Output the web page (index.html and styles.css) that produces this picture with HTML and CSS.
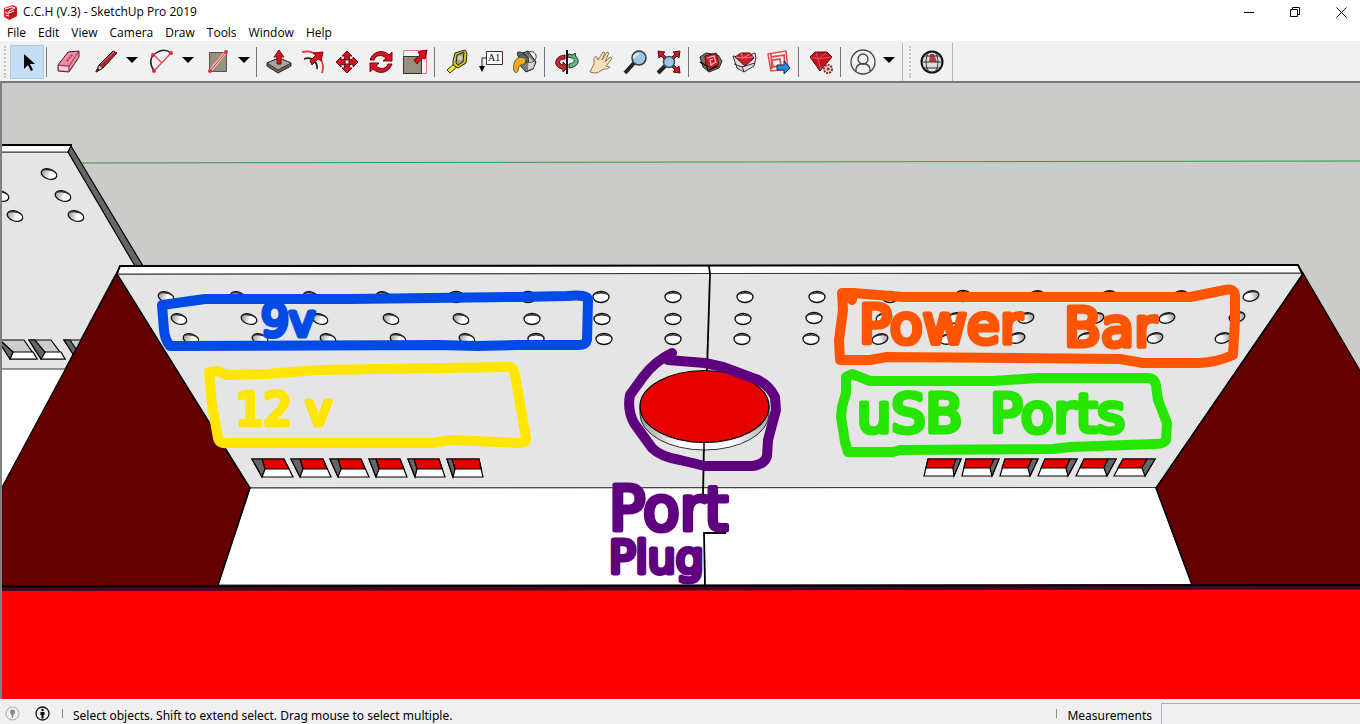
FILE: index.html
```html
<!DOCTYPE html>
<html lang="en">
<head>
<meta charset="UTF-8" />
<meta name="viewport" content="width=device-width, initial-scale=1.0" />
<title>C.C.H (V.3) - SketchUp Pro 2019</title>
<link rel="stylesheet" href="styles.css">
</head>
<body>
<header class="titlebar">
  <svg class="app-icon" viewBox="0 0 14 15"><path d="M1 3 10 0l4 2v9l-8 4-5-3z" fill="#e02a32"/><path d="M1 4l5 2v9l8-4V3" fill="#c4141e"/><path d="M2 4l7-2 3 1-6 3v2l5-2M2 7l4 2M3 10l3 1" fill="none" stroke="#fff" stroke-width="1"/></svg>
  <h1>C.C.H (V.3) - SketchUp Pro 2019</h1>
  <div class="window-buttons">
    <button aria-label="Minimize"><svg viewBox="0 0 11 11"><path d="M0 5.500h10"/></svg></button>
    <button aria-label="Restore"><svg viewBox="0 0 11 11"><path d="M.5 2.500h7v7h-7zM2.500 2.500v-2h7v7h-2"/></svg></button>
    <button aria-label="Close"><svg viewBox="0 0 11 11"><path d="M.5.5l10 10M10.500.5l-10 10"/></svg></button>
  </div>
</header>

<nav class="menubar">
  <button>File</button>
  <button>Edit</button>
  <button>View</button>
  <button>Camera</button>
  <button>Draw</button>
  <button>Tools</button>
  <button>Window</button>
  <button>Help</button>
</nav>

<div class="toolbar">
  <span class="grip"></span>
  <button class="tool active" aria-label="Select"><svg viewBox="0 0 26 26"><path d="M10 5v15l4-4 3 6 2-1-3-6h5z" fill="#000"/></svg></button>
  <span class="sep"></span>
  <button class="tool" aria-label="Eraser"><svg viewBox="0 0 26 26"><path d="M2 16 12 3l11-1v6L13 23l-11-1z" fill="#f08ca0" stroke="#3c2028"/><path d="M2 16l11 1L23 2M13 17v6" fill="none" stroke="#7d3c4a"/><path d="M3 17l9 1v4l-9-1z" fill="#fbc3cf"/><path d="M11 12l6-7" stroke="#b83550" stroke-width="2" stroke-dasharray="2 1"/></svg></button>
  <span class="split">
    <button class="tool" aria-label="Line"><svg viewBox="0 0 26 26"><path d="M3 23l3-7L20 2l4 2L10 19z" fill="#b3252c" stroke="#2e1010"/><path d="M3 23l3-7 4 3z" fill="#d9c79c" stroke="#333"/><path d="M3 23l2-4 2 2z" fill="#222"/><path d="M8 15L21 3" stroke="#e0686c"/></svg></button>
    <button class="caret" aria-label="Line tools"></button>
  </span>
  <span class="split">
    <button class="tool" aria-label="Arc"><svg viewBox="0 0 26 26"><path d="M5 22C0 14 1 8 7 4s11-3 15 0" fill="none" stroke="#222" stroke-width="1.500"/><path d="M5 22L22 4M5 6l8 8M5 22" fill="none" stroke="#e04450" stroke-width="1.200"/><g fill="#dc2837"><circle cx="5" cy="22" r="2"/><circle cx="22" cy="4" r="2"/><circle cx="4" cy="6" r="2"/></g></svg></button>
    <button class="caret" aria-label="Arc tools"></button>
  </span>
  <span class="split">
    <button class="tool" aria-label="Rectangle"><svg viewBox="0 0 26 26"><path d="M4.500 3.500h17v19h-17z" fill="#96917f" stroke="#55534b"/><path d="M5 22L21 3" stroke="#ffb8b8" stroke-width="3"/><path d="M5 22L21 3" stroke="#d93844"/><circle cx="5" cy="22" r="2" fill="#dd3341"/><circle cx="21" cy="3" r="2" fill="#dd3341"/></svg></button>
    <button class="caret" aria-label="Shape tools"></button>
  </span>
  <span class="sep"></span>
  <button class="tool" aria-label="Push/Pull"><svg viewBox="0 0 26 26"><path d="M1 14l12-5 12 5v3l-13 7L1 17z" fill="#69665a" stroke="#222"/><path d="M1 14l12-5 12 5-13 7z" fill="#aaa697" stroke="#333"/><path d="M11 15V8H8l5-7 5 7h-3v7z" fill="#d9121d" stroke="#7c0710"/></svg></button>
  <button class="tool" aria-label="Offset"><svg viewBox="0 0 26 26"><path d="M2 3c14-3 24 9 20 21" fill="none" stroke="#e33b47" stroke-width="1.800"/><path d="M4 10c7-3 14 3 13 10" fill="none" stroke="#222" stroke-width="1.800"/><path d="M10 12l6-6-3-2 10-1-2 9-3-2-6 6z" fill="#d9121d" stroke="#7c0710"/></svg></button>
  <button class="tool" aria-label="Move"><svg viewBox="0 0 26 26"><g fill="#d9121d" stroke="#5f080d"><path d="M13 2l5 5h-3l1 4h-6l1-4H8z"/><path d="M13 24l5-5h-3l1-4h-6l1 4H8z"/><path d="M2 13l5-5v3l4-1v6l-4-1v3z"/><path d="M24 13l-5-5v3l-4-1v6l4-1v3z"/></g></svg></button>
  <button class="tool" aria-label="Rotate"><svg viewBox="0 0 26 26"><g fill="#d3151f" stroke="#760b12"><path d="M2 11C5 2 15 0 21 6l3-3v9h-9l3-3C13 5 8 6 6 11z"/><path d="M24 15c-3 9-13 11-19 5l-3 3v-9h9l-3 3c5 4 10 3 12-2z"/></g></svg></button>
  <button class="tool" aria-label="Scale"><svg viewBox="0 0 26 26"><path d="M1.500 1.500h23v23h-23z" fill="#fff4f4" stroke="#e77880"/><path d="M1.500 7.500h18v17h-18z" fill="#96917f" stroke="#333"/><path d="M12 11l6-5-2-3 9-2-2 9-3-1-5 6z" fill="#d9121d" stroke="#7c0710"/></svg></button>
  <span class="sep"></span>
  <button class="tool" aria-label="Tape Measure"><svg viewBox="0 0 26 26"><path d="M3 21l9-8 3 3-9 8z" fill="#f4e52a" stroke="#333"/><path d="M9 12l2-8 10-3 2 3-1 10-8 5-5-3z" fill="#d8c326" stroke="#222"/><path d="M12 14l1-8 7-3-1 10-5 3z" fill="#a19e70" stroke="#222"/><circle cx="16" cy="9" r="2.500" fill="#cfccb0"/></svg></button>
  <button class="tool" aria-label="Text"><svg viewBox="0 0 26 26"><path d="M8.500 2.500h16v13h-16z" fill="#fff" stroke="#333"/><path d="M8 9H4v9" fill="none" stroke="#222"/><path d="M1 17h6l-3 6z" fill="#000"/><text class="tool-text" x="10" y="12">A1</text></svg></button>
  <button class="tool" aria-label="Paint Bucket"><svg viewBox="0 0 26 26"><path d="M8 5l8-3 8 11-3 7-7 3-8-9z" fill="#777b78" stroke="#222"/><path d="M17 8l6 6-2 5-5 2z" fill="#d4d8d4"/><path d="M15 4c6-4 10 1 9 5s-7 6-9 3" fill="none" stroke="#444"/><ellipse cx="11" cy="8" rx="3" ry="7" fill="#53666b" stroke="#222" transform="rotate(-50 11 8)"/><path d="M14 10C6 5 0 12 2 22c1 2 3 2 4 0 0-5 3-7 7-7z" fill="#f0ae26" stroke="#6a4b0b"/></svg></button>
  <span class="sep"></span>
  <button class="tool" aria-label="Orbit"><svg viewBox="0 0 26 26"><path d="M14 5l5 1 2-2 1 4c4 3 3 10-7 11v-4c6-1 7-5 3-6l-4-1z" fill="#62b783" stroke="#173d27"/><path d="M11 6C-1 7-1 19 9 20v3l5-5-5-5v3c-5-1-5-6 2-6z" fill="#c12735" stroke="#4e0b11"/><path d="M13 1v24" stroke="#111" stroke-width="2"/></svg></button>
  <button class="tool" aria-label="Pan"><svg viewBox="0 0 26 26"><path d="M2 23l4-8V9c1-2 3-2 3 0l1 2 5-8c2 0 2 1 1 3l-2 5 5-8c2 0 2 2 1 3l-3 7 5-5c2 0 2 2 1 3l-5 6 4 1c-2 3-5 1-8 3-3 2-4 3-7 3z" fill="#f5dfb8" stroke="#8b7551"/></svg></button>
  <button class="tool" aria-label="Zoom"><svg viewBox="0 0 26 26"><path d="M3 24l9-10" stroke="#222" stroke-width="4"/><circle cx="17" cy="9" r="7" fill="#9dc4e3" stroke="#293e4f" stroke-width="1.500"/><path d="M12 9c0-3 2-4 5-4" fill="none" stroke="#e4f4ff" stroke-width="2"/></svg></button>
  <button class="tool" aria-label="Zoom Extents"><svg viewBox="0 0 26 26"><path d="M2 24l8-8" stroke="#222" stroke-width="4"/><g fill="#ca1823" stroke="#6c0710"><path d="M2 2l7 1-2 2 3 3-2 2-3-3-2 2z"/><path d="M24 2l-7 1 2 2-3 3 2 2 3-3 2 2z"/><path d="M24 24l-1-7-2 2-3-3-2 2 3 3-2 2z"/></g><circle cx="13" cy="13" r="5.500" fill="#9dc4e3" stroke="#34536b" stroke-width="1.500"/></svg></button>
  <span class="sep"></span>
  <button class="tool" aria-label="3D Warehouse"><svg viewBox="0 0 26 26"><path d="M2 8l6-4 12 2 4 6-3 7-10 4-6-5z" fill="#7e7265" stroke="#222"/><path d="M7 7l11-3 3 11-7 4-6-2z" fill="#cf1924" stroke="#5d0b10"/><path d="M9 9l7-2 2 6-5 3-1-5 3-1" fill="none" stroke="#ffc3c3" stroke-width="1.300"/><path d="M2 13l7 4 1 5M11 21l9-4" fill="none" stroke="#181818" stroke-width="1.500"/></svg></button>
  <button class="tool" aria-label="Extension Warehouse"><svg viewBox="0 0 26 26"><path d="M1 7l9 2 13-5 1 5-2 8-10 6-7-4z" fill="#ddd" stroke="#333"/><path d="M2 15l8 3 13-4M10 17l2 6" fill="none" stroke="#333"/><path d="M3 8l6-4 9 0 4 5-9 8z" fill="#d01b28" stroke="#570c12"/><path d="M4 8l7 1 10-1M9 4l2 5 7-4" fill="none" stroke="#f48187"/></svg></button>
  <button class="tool" aria-label="Send to LayOut"><svg viewBox="0 0 26 26"><path d="M2 5l18-3 2 18-17 2z" fill="#fff" stroke="#e34b55" stroke-width="1.500"/><path d="M5 8l13-2 1 10M6 11l8-1 1 7-8 1zM5 5l1 15" fill="none" stroke="#e34b55" stroke-width="1.800"/><path d="M11 16h7v-4l6 7-6 6v-4h-7z" fill="#248de2" stroke="#102f48"/></svg></button>
  <span class="sep"></span>
  <button class="tool" aria-label="Extension Manager"><svg viewBox="0 0 26 26"><path d="M2 8l5-5h12l5 5-12 14z" fill="#c4111e" stroke="#610a11"/><path d="M3 8l7 2 13-2M8 3l2 7 8-6M10 10l3 11" fill="none" stroke="#e0505a"/><circle cx="20" cy="20" r="4" fill="#f0d7d7" stroke="#8a2932" stroke-width="2" stroke-dasharray="2 1"/><circle cx="20" cy="20" r="1.500" fill="#8a2932"/></svg></button>
  <span class="sep"></span>
  <button class="tool" aria-label="Sign in"><svg viewBox="0 0 26 26"><g fill="none" stroke="#3f454b" stroke-width="1.300"><circle cx="13" cy="13" r="12"/><circle cx="13" cy="10" r="5"/><path d="M6 22v-2c1-7 13-7 14 0v2"/></g></svg></button>
  <button class="caret" aria-label="Account"></button>
  <span class="sep tall"></span>
  <span class="grip"></span>
  <button class="tool" aria-label="Add Location"><svg viewBox="0 0 26 26"><circle cx="13" cy="13" r="10.500" fill="#ddd" stroke="#111" stroke-width="2"/><path d="M11 5h4l3 8h-8z" fill="#c9343e"/><path d="M3 13h20M5 7h16M5 19h16M10 3c-4 6-4 14 0 20M16 3c4 6 4 14 0 20" fill="none" stroke="#333"/></svg></button>
  <span class="sep tall"></span>
</div>

<main class="viewport">
<svg class="model" viewBox="2 83 1358 616" preserveAspectRatio="xMidYMid slice">
  <defs>
    <linearGradient id="holeLeft"><stop offset="0" stop-color="#999"/><stop offset=".6" stop-color="#fff"/></linearGradient>
    <linearGradient id="holeRight"><stop offset=".4" stop-color="#fff"/><stop offset="1" stop-color="#999"/></linearGradient>
    <linearGradient id="lip"><stop offset="0" stop-color="#999"/><stop offset=".3" stop-color="#fff"/><stop offset=".7" stop-color="#fff"/><stop offset="1" stop-color="#aab"/></linearGradient>
    <g id="hl"><ellipse rx="8" ry="5" transform="rotate(18)" fill="url(#holeLeft)" stroke="#111" stroke-width="1.300"/><path d="M-7-3Q-1-8 7-1Q0-5-7-3" fill="#222"/></g>
    <g id="hm"><ellipse rx="8" ry="5.500" fill="#fff" stroke="#111" stroke-width="1.300"/><path d="M-7-2Q0-8 7-2Q0-5-7-2" fill="#222"/></g>
    <g id="hr"><ellipse rx="8" ry="5" transform="rotate(-15)" fill="url(#holeRight)" stroke="#111" stroke-width="1.300"/><path d="M-7-1Q0-8 7-3Q0-5-7-1" fill="#222"/></g>
  </defs>

  <!-- background and green axis -->
  <rect class="sky" x="2" y="83" width="1358" height="616"/>
  <path d="M82 163L1360 161" stroke="#28a03c"/>

  <!-- second box behind on the left -->
  <path class="floor" d="M2 369h70L2 490z"/>
  <path class="panel line" d="M0 152h68l67 113-20 10-50 94H0z"/>
  <path class="floor line" d="M0 145.500h71l-3 6.500H0z"/>
  <path class="shade edge" d="M71 146l72 120h-8L68 152z"/>
  <path d="M0 145h72" stroke="#000" stroke-width="2"/>
  <use href="#hl" x="49" y="174"/><use href="#hl" x="63" y="196"/><use href="#hl" x="76" y="216"/><use href="#hl" x="15" y="216"/><use href="#hl" x="1" y="196"/>
  <g class="edge">
    <path fill="#ccc" d="M0 340h24l13 19H10L0 342z"/><path fill="#fff" d="M13 352h20l4 7H10z"/><path class="shade" d="M0 340l13 12-3 7-10-15z"/>
    <path fill="#ccc" d="M29 340h22l14 19H41z"/><path fill="#fff" d="M45 352h16l4 7H41z"/><path class="shade" d="M29 340h6l10 12-4 7z"/>
    <path fill="#ccc" d="M64 340h22v19h-9z"/><path class="shade" d="M64 340h6l8 12-2 7z"/>
  </g>

  <!-- main box -->
  <path class="side edge" d="M117 273L250 488 218 586H0V491z"/>
  <path class="side edge" d="M1303 273L1156 488l36 98h170V374z"/>
  <path class="panel line" d="M116 274L1303 273 1156 487.500 250 488z"/>
  <path class="floor line" d="M120 266L1298 265l5 8L116 274z"/>
  <path d="M116 276l4-10L1298 265l5 10" fill="none" stroke="#000" stroke-width="2"/>
  <path class="floor line" d="M250 488L1156 487.500l36 97.500H218z"/>
  <path d="M117 274L250 488 218 585M1303 274L1156 488l36 97" fill="none" stroke="#000" stroke-width="1.500"/>

  <use href="#hl" x="166" y="297"/><use href="#hl" x="238" y="297"/><use href="#hl" x="311" y="297"/><use href="#hl" x="384" y="297"/><use href="#hm" x="456" y="297"/><use href="#hm" x="528" y="297"/><use href="#hm" x="601" y="297"/><use href="#hm" x="673" y="297"/><use href="#hm" x="745" y="297"/><use href="#hm" x="817" y="297"/><use href="#hm" x="890" y="297"/><use href="#hm" x="963" y="296"/><use href="#hr" x="1036" y="296"/><use href="#hr" x="1108" y="296"/><use href="#hr" x="1180" y="296"/><use href="#hr" x="1251" y="296"/>
  <use href="#hl" x="179" y="319"/><use href="#hl" x="249" y="319"/><use href="#hl" x="320" y="319"/><use href="#hl" x="391" y="319"/><use href="#hl" x="461" y="319"/><use href="#hm" x="532" y="319"/><use href="#hm" x="602" y="319"/><use href="#hm" x="673" y="319"/><use href="#hm" x="743" y="319"/><use href="#hm" x="814" y="318"/><use href="#hr" x="884" y="318"/><use href="#hr" x="955" y="318"/><use href="#hr" x="1026" y="318"/><use href="#hr" x="1096" y="318"/><use href="#hr" x="1167" y="318"/><use href="#hr" x="1237" y="317"/>
  <use href="#hl" x="191" y="339"/><use href="#hl" x="260" y="339"/><use href="#hl" x="328" y="339"/><use href="#hl" x="398" y="339"/><use href="#hl" x="467" y="339"/><use href="#hm" x="536" y="339"/><use href="#hm" x="604" y="339"/><use href="#hm" x="673" y="339"/><use href="#hm" x="742" y="339"/><use href="#hm" x="811" y="339"/><use href="#hr" x="880" y="339"/><use href="#hr" x="948" y="339"/><use href="#hr" x="1017" y="338"/><use href="#hr" x="1086" y="338"/><use href="#hr" x="1155" y="338"/><use href="#hr" x="1223" y="338"/>

  <!-- switches, left bank -->
  <g class="edge">
    <path class="floor" d="M252 459h32l9 18h-31z"/><path class="red" d="M262 459h22l5 10h-24z"/><path class="shade" d="M252 459h10l3 10-3 8z"/>
    <path class="floor" d="M291 459h32l8 18h-31z"/><path class="red" d="M300 459h23l4 10h-24z"/><path class="shade" d="M291 459h9l3 10-3 8z"/>
    <path class="floor" d="M330 459h31l8 18h-31z"/><path class="red" d="M338 459h23l4 10h-24z"/><path class="shade" d="M330 459h8l3 10-3 8z"/>
    <path class="floor" d="M369 459h31l7 18h-31z"/><path class="red" d="M376 459h24l4 10h-25z"/><path class="shade" d="M369 459h7l3 10-3 8z"/>
    <path class="floor" d="M408 459h31l6 18h-30z"/><path class="red" d="M414 459h25l3 10h-25z"/><path class="shade" d="M408 459h6l3 10-2 8z"/>
    <path class="floor" d="M447 459h32l4 18h-30z"/><path class="red" d="M452 459h27l2 10h-26z"/><path class="shade" d="M447 459h5l3 10-2 8z"/>
  </g>
  <!-- switches, right bank -->
  <g class="edge">
    <path class="floor" d="M928 459h33l-7 17h-30z"/><path class="red" d="M928 459h28l-3 9h-27z"/><path class="shade" d="M961 459h-5l-3 9 1 8z"/>
    <path class="floor" d="M966 459h33l-7 17h-30z"/><path class="red" d="M966 459h28l-4 9h-26z"/><path class="shade" d="M999 459h-5l-4 9 2 8z"/>
    <path class="floor" d="M1005 459h33l-8 17h-30z"/><path class="red" d="M1005 459h27l-4 9h-26z"/><path class="shade" d="M1038 459h-6l-4 9 2 8z"/>
    <path class="floor" d="M1045 459h32l-9 17h-30z"/><path class="red" d="M1045 459h25l-4 9h-25z"/><path class="shade" d="M1077 459h-7l-4 9 2 8z"/>
    <path class="floor" d="M1084 459h32l-9 17h-31z"/><path class="red" d="M1084 459h24l-4 9h-24z"/><path class="shade" d="M1116 459h-8l-4 9 3 8z"/>
    <path class="floor" d="M1123 459h32l-10 17h-31z"/><path class="red" d="M1123 459h24l-5 9h-24z"/><path class="shade" d="M1155 459h-8l-5 9 3 8z"/>
  </g>

  <!-- seam and round plug -->
  <path d="M709 266l1 8-3 96M704 440l-1 58h20M726 533h-22l1 52" fill="none" stroke="#000" stroke-width="1.800"/>
  <path class="line" d="M640 406v8a64.500 36 0 0 0 129 0v-8z" fill="url(#lip)"/>
  <ellipse class="red edge" cx="704.500" cy="406.500" rx="64.500" ry="36"/>
  <path d="M704 443v8" stroke="#000" stroke-width="1.500"/>

  <!-- front face -->
  <path fill="#f00" d="M0 587H1360V699H0z"/>
  <path fill="#450628" d="M0 585.500L1360 584v5.500L0 591z"/>
  <path d="M0 586.500L1360 585" stroke="#000" stroke-width="2"/>

  <!-- marker notes -->
  <g class="marker blue">
    <path d="M162 305L205 299 350 299 517 297 567 296Q588 294 588 300L587 340Q586 345 578 345L517 345 477 346 440 345 170 346Q165 340 164 330z"/>
    <text x="261" y="336" font-size="44">9v</text>
  </g>
  <g class="marker yellow">
    <path d="M209 372L217 371 227 375 267 374 317 370 508 367Q514 367 515 375L526 438Q527 443 520 443L450 440 433 443 227 443Q219 444 218 438L212 405z"/>
    <text x="236" y="425" font-size="44">12 v</text>
  </g>
  <g class="marker orange">
    <path d="M842 293L853 293 903 297 1190 297 1225 290Q1234 288 1235 295L1235 320 1233 355Q1215 363 1197 363L1143 363 1120 359 887 357 870 360 840 360 839 340 843 310zM851 294l1 6"/>
    <text x="859" y="343" font-size="54">Power</text>
    <text x="1064" y="346" font-size="54">Bar</text>
  </g>
  <g class="marker green">
    <path d="M846 377L852 374 870 381 993 381 1037 378 1147 378Q1155 378 1156 386L1158 400 1167 423 1166 440Q1164 444 1155 444L1070 447 1053 449 900 450 893 452 848 452 845 442 841 417 842 407 846 393z"/>
    <text x="857" y="432" font-size="54">uSB</text>
    <text x="990" y="432" font-size="54">Ports</text>
  </g>
  <g class="marker purple">
    <path d="M672 353Q655 361 643 377L630 395Q627 410 634 423L652 448Q661 457 680 460L705 466 753 466Q765 464 767 456L768 440 776 410 775 397Q768 382 750 377L723 367 705 363 668 360"/>
    <text><tspan x="609" y="530" font-size="60">Port</tspan><tspan x="609" y="573" font-size="44">Plug</tspan></text>
  </g>
</svg>
</main>

<footer class="statusbar">
  <svg class="status-icon" viewBox="0 0 15 15"><circle cx="7.500" cy="7.500" r="6.500" fill="none" stroke="#aaa"/><path d="M5 6a2.500 2.500 0 0 1 5 0c0 2-2 2-2 6H7c0-4-2-4-2-6" fill="#888"/></svg>
  <svg class="status-icon" viewBox="0 0 15 15"><circle cx="7.500" cy="7.500" r="6.500" fill="none" stroke="#111" stroke-width="1.300"/><circle cx="7.500" cy="4" r="1.300"/><path d="M5.500 6h4v3H8.500v3.500h-2V9h-1z"/></svg>
  <span class="status-sep"></span>
  <p>Select objects. Shift to extend select. Drag mouse to select multiple.</p>
  <span class="status-sep"></span>
  <label for="measurements">Measurements</label>
  <input type="text" id="measurements">
</footer>
</body>
</html>
```
FILE: styles.css
```css
* { box-sizing: border-box; }
body { margin: 0; height: 100vh; display: flex; flex-direction: column; overflow: hidden; background: #f0f0f0; color: #000; font-family: "Open Sans", "Noto Sans", sans-serif; font-size: 12px; line-height: 16px; }
button { padding: 0; border: none; background: none; color: inherit; font: inherit; }

.titlebar { display: flex; align-items: center; height: 24px; padding-left: 3px; background: #fff; }
.titlebar h1 { flex: 1; margin: 0 0 0 6px; font-size: 12px; font-weight: 400; }
.app-icon { width: 14px; height: 15px; }
.window-buttons { display: flex; gap: 8px; }
.window-buttons button { width: 38px; height: 20px; display: flex; align-items: center; justify-content: center; }
.window-buttons svg { width: 11px; height: 11px; fill: none; stroke: #000; }

.menubar { display: flex; gap: 12px; height: 17px; padding-left: 7px; background: #fff; }

.toolbar { display: flex; align-items: center; height: 40px; padding-top: 2px; flex-shrink: 0; background: #f1f1f1; }
.grip { width: 2px; height: 32px; margin: 0 4px; border-left: 2px dotted #c4c4c4; }
.tool { width: 34px; height: 34px; display: flex; align-items: center; justify-content: center; flex-shrink: 0; }
.tool svg { width: 26px; height: 26px; }
.tool.active { background: #c4dff5; border: 1px solid #a5cdee; }
.tool-text { font: 10px "Liberation Serif", serif; }
.split { display: flex; align-items: center; margin-left: 3px; }
.caret { width: 17px; height: 34px; margin-right: 2px; display: flex; align-items: center; justify-content: center; }
.caret::before { content: ""; margin-bottom: 4px; border: 6px solid transparent; border-top-color: #000; border-bottom: none; }
.sep { width: 1px; height: 30px; margin: 0 5px 0 2px; background: #777; }
.sep.tall { height: 38px; background: #b4b4b4; margin: 0 2px 0 3px; }

.viewport { flex: 1; min-height: 0; border-left: 2px solid #808080; border-top: 2px solid #777; }
.model { display: block; width: 100%; height: 100%; }
.sky { fill: #cbcbc9; }
.panel { fill: #e5e5e5; }
.floor { fill: #fff; }
.side { fill: #640000; }
.shade { fill: #666; }
.red { fill: #e60000; }
.line { stroke: #333; stroke-width: 1; }
.edge { stroke: #000; stroke-width: 1.2; }

.marker path { fill: none; stroke-width: 10; stroke-linejoin: round; stroke-linecap: round; }
.marker text { font-family: "DejaVu Sans", sans-serif; stroke-width: 5; stroke-linejoin: round; }
.blue { stroke: #004be6; fill: #004be6; }
.yellow { stroke: #ffe600; fill: #ffe600; }
.orange { stroke: #ff5500; fill: #ff5500; }
.green { stroke: #26e600; fill: #26e600; }
.purple { stroke: #5f0080; fill: #5f0080; }

.statusbar { display: flex; align-items: center; height: 25px; flex-shrink: 0; padding: 4px 0 0 5px; background: #f0f0f0; font-family: "Noto Sans", sans-serif; }
.statusbar p { flex: 1; margin: 0 0 0 10px; padding-top: 4px; }
.statusbar label { margin: 0 9px 0 10px; padding-top: 4px; }
.status-icon { width: 15px; height: 15px; margin-right: 15px; }
.status-sep { width: 1px; height: 9px; background: #888; }
.status-icon + .status-sep { margin-left: -3px; }
.statusbar input { width: 199px; height: 21px; border: 1px solid #a3b3c8; border-right: none; border-bottom: none; background: #f0f0f0; font: inherit; }
```
